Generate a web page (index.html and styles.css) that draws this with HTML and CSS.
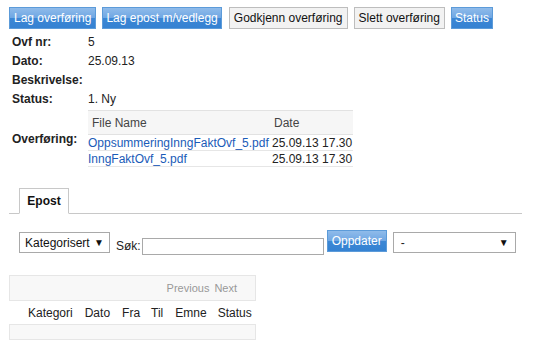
FILE: index.html
```html
<!DOCTYPE html>
<html lang="no">
<head>
  <meta charset="UTF-8">
  <title>Overføring</title>
  <link rel="stylesheet" href="styles.css">
</head>
<body>
  <div class="toolbar">
    <button class="btn btn-blue">Lag overføring</button>
    <button class="btn btn-blue">Lag epost m/vedlegg</button>
    <button class="btn">Godkjenn overføring</button>
    <button class="btn">Slett overføring</button>
    <button class="btn btn-blue">Status</button>
  </div>

  <div class="details">
    <div class="label">Ovf nr:</div>
    <div class="value">5</div>
    <div class="label">Dato:</div>
    <div class="value">25.09.13</div>
    <div class="label">Beskrivelse:</div>
    <div class="value"></div>
    <div class="label">Status:</div>
    <div class="value">1. Ny</div>
    <div class="label label-files">Overføring:</div>
    <div class="value">
      <table class="files">
        <thead>
          <tr><th>File Name</th><th>Date</th></tr>
        </thead>
        <tbody>
          <tr><td><a href="#">OppsummeringInngFaktOvf_5.pdf</a></td><td>25.09.13 17.30</td></tr>
          <tr><td><a href="#">InngFaktOvf_5.pdf</a></td><td>25.09.13 17.30</td></tr>
        </tbody>
      </table>
    </div>
  </div>

  <div class="tabs">
    <div class="tab">Epost</div>
  </div>

  <div class="filters">
    <div class="select select-cat">Kategorisert <span class="arrow">&#9660;</span></div>
    <label class="search-label">Søk:</label>
    <input type="text" class="search-input">
    <button class="btn btn-blue btn-update">Oppdater</button>
    <div class="select select-wide"><span class="dash">-</span><span class="arrow">&#9660;</span></div>
  </div>

  <div class="mail-list">
    <div class="paging">
      <span class="page-link">Previous</span>
      <span class="page-link">Next</span>
    </div>
    <table class="mails">
      <thead>
        <tr><th>Kategori</th><th>Dato</th><th>Fra</th><th>Til</th><th>Emne</th><th>Status</th></tr>
      </thead>
    </table>
    <div class="list-footer"></div>
  </div>
</body>
</html>
```

FILE: styles.css
```css
body {
  margin: 0;
  padding: 7px 9px;
  font-family: "Liberation Sans", Arial, sans-serif;
  font-size: 12px;
  color: #222;
  background: #fff;
}

.toolbar {
  display: flex;
  gap: 6px;
}

.btn {
  height: 22px;
  padding: 0 4px;
  font-family: "Liberation Sans", Arial, sans-serif;
  font-size: 12px;
  color: #111;
  background: #f2f2f2;
  border: 1px solid #bdbdbd;
  border-radius: 0;
  cursor: pointer;
}

.btn-blue {
  color: #fff;
  border-color: #5c9bd9;
  background: linear-gradient(#8fbbea, #6ea6e3 50%, #3c87d5 50%, #3582d2);
}

.toolbar .btn:nth-child(2),
.toolbar .btn:last-child {
  padding: 0 3px;
}

.toolbar .btn:nth-child(3) {
  margin-left: 1px;
}

/* Detaljer */
.details {
  display: grid;
  grid-template-columns: 76px auto;
  grid-auto-rows: 19px;
  align-items: center;
  padding: 3px 0 0 3px;
}

.label {
  font-weight: bold;
  color: #222;
}

.value {
  color: #222;
}

.label-files,
.details .value:last-child {
  grid-row: span 3;
}

.details .value:last-child {
  align-self: start;
  padding-top: 2px;
}

.label-files {
  padding-top: 4px;
}

.files {
  border-collapse: collapse;
}

.files th {
  height: 23px;
  padding: 0 2px;
  text-align: left;
  font-weight: normal;
  color: #444;
  background: #f6f6f6;
  border-top: 1px solid #e2e2e2;
  border-bottom: 1px solid #e2e2e2;
}

.files th:first-child {
  width: 178px;
  padding-left: 4px;
}

.files th:last-child {
  width: 77px;
}

.files td {
  height: 15px;
  padding: 0;
  border-bottom: 1px solid #e6e6e6;
  white-space: nowrap;
}

.files a {
  color: #1a5bb8;
  text-decoration: none;
}

/* Faner */
.tabs {
  display: flex;
  margin-top: 23px;
  padding-left: 10px;
  border-bottom: 1px solid #c8c8c8;
  width: 503px;
}

.tab {
  width: 48px;
  height: 24px;
  line-height: 24px;
  margin-bottom: -1px;
  text-align: center;
  font-weight: bold;
  color: #111;
  background: #fff;
  border: 1px solid #c8c8c8;
  border-bottom-color: #fff;
}

/* Filter */
.filters {
  display: flex;
  align-items: flex-start;
  margin-top: 16px;
  padding-left: 10px;
}

.select {
  display: flex;
  align-items: center;
  justify-content: space-between;
  height: 19px;
  margin-top: 2px;
  padding: 0 5px;
  border: 1px solid #a9a9a9;
  background: #fff;
  color: #111;
}

.select-cat {
  width: 79px;
  font-size: 12px;
}

.arrow {
  font-size: 10px;
  color: #111;
}

.search-label {
  margin: 9px 0 0 6px;
  color: #222;
}

.search-input {
  width: 180px;
  height: 15px;
  margin: 8px 0 0 1px;
  padding: 0;
  border: 1px solid #a9a9a9;
}

.btn-update {
  height: 22px;
  margin-left: 3px;
  padding: 0 4px;
  font-size: 12px;
}

.select-wide {
  width: 108px;
  margin-left: 6px;
  height: 19px;
  padding: 0 6px 0 7px;
}

.dash {
  color: #222;
}

/* Epostliste */
.mail-list {
  width: 247px;
  margin-top: 20px;
}

.paging {
  height: 24px;
  display: flex;
  align-items: center;
  justify-content: flex-end;
  gap: 5px;
  padding-right: 18px;
  font-size: 11px;
  background: #f8f8f8;
  border: 1px solid #e6e6e6;
}

.page-link {
  color: #999;
}

.mails {
  border-collapse: collapse;
  margin-left: 19px;
}

.mails th {
  height: 23px;
  padding: 0 12px 0 0;
  font-weight: normal;
  color: #222;
  text-align: left;
}

.mails th:nth-child(3),
.mails th:nth-child(5) {
  padding-right: 11px;
}

.mails th:last-child {
  padding-right: 0;
}

.list-footer {
  height: 14px;
  background: #f8f8f8;
  border: 1px solid #e6e6e6;
}
```
